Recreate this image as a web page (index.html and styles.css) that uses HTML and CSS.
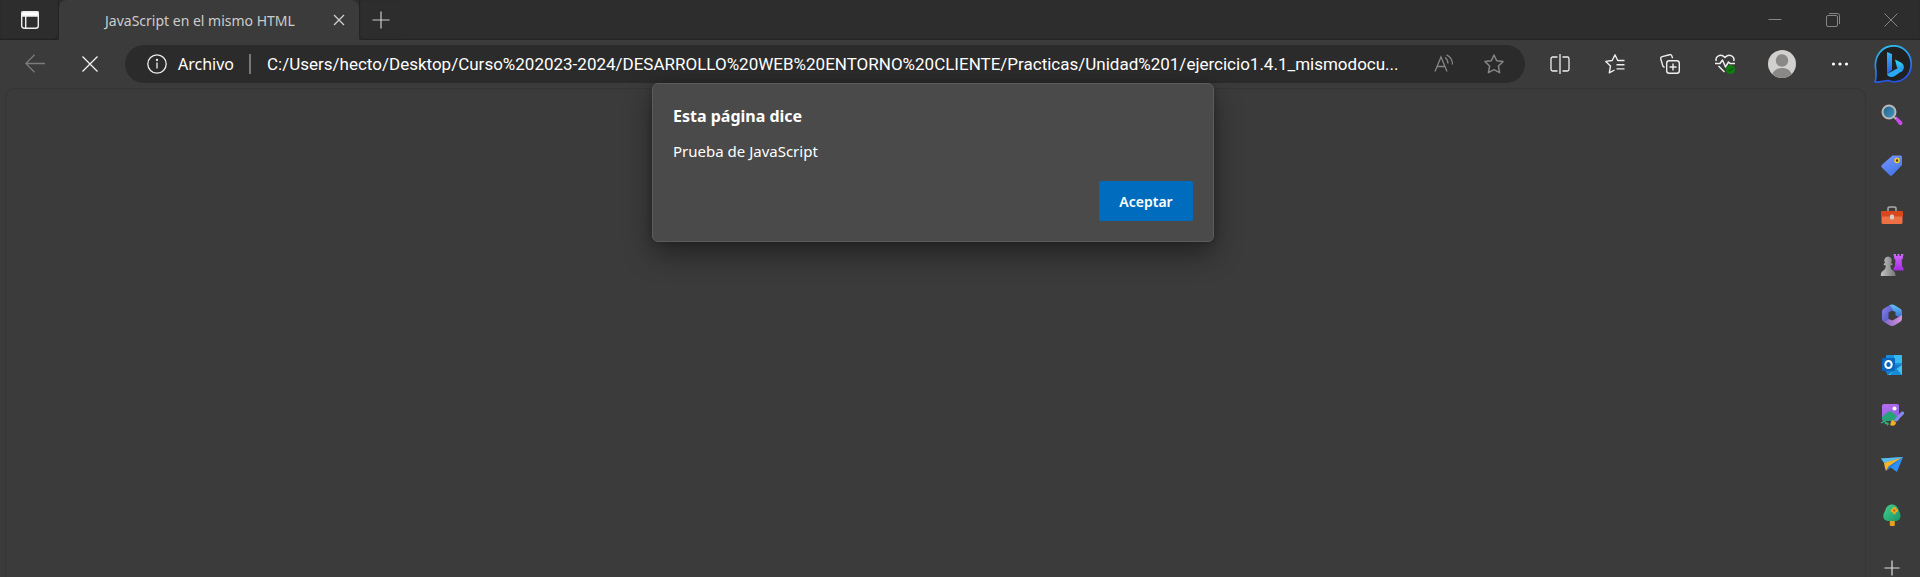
FILE: index.html
```html
<!DOCTYPE html>
<html lang="es">
<head>
<meta charset="utf-8">
<title>JavaScript en el mismo HTML</title>
<link rel="stylesheet" href="styles.css">
</head>
<body>
<header class="tabstrip">
  <button class="tab-actions" aria-label="Acciones de pestaña">
    <svg width="20" height="20" viewBox="0 0 20 20" fill="none" stroke="#eee" stroke-width="1.4"><rect x="1.7" y="1.7" width="16.6" height="16.6" rx="2.5"/><path d="M2 2h16v4H2z" fill="#fff"/><path d="M5.7 6v12"/></svg>
  </button>
  <div class="tab">
    <span class="tab-title">JavaScript en el mismo HTML</span>
    <button class="tab-close" aria-label="Cerrar pestaña">
      <svg width="12" height="12" viewBox="0 0 12 12" stroke="#d0d0d0" stroke-width="1.3"><path d="M1 1l10 10M11 1L1 11"/></svg>
    </button>
  </div>
  <button class="new-tab" aria-label="Nueva pestaña">
    <svg width="18" height="18" viewBox="0 0 18 18" stroke="#ccc" stroke-width="1.2"><path d="M9 .5v17M.5 9h17"/></svg>
  </button>
  <div class="window-controls">
    <button aria-label="Minimizar"><svg width="14" height="14" viewBox="0 0 14 14" stroke="#858585"><path d="M.5 6.5h13"/></svg></button>
    <button aria-label="Restaurar"><svg width="14" height="14" viewBox="0 0 14 14" fill="none" stroke="#858585"><rect x=".5" y="2.5" width="11" height="11" rx="1.5"/><path d="M3 .5h8.500a2 2 0 0 1 2 2V11"/></svg></button>
    <button aria-label="Cerrar"><svg width="14" height="14" viewBox="0 0 14 14" stroke="#858585"><path d="M.5.5l13 13M13.500.5l-13 13"/></svg></button>
  </div>
</header>

<nav class="toolbar" aria-label="Navegación">
  <div class="nav-buttons">
    <button aria-label="Atrás"><svg width="20" height="20" viewBox="0 0 20 20" fill="none" stroke="#7b7b7b" stroke-width="1.3"><path d="M20 9.500H.8M9.500.8L.8 9.500l8.700 8.700"/></svg></button>
    <button aria-label="Detener"><svg width="16" height="16" viewBox="0 0 16 16" stroke="#f2f2f2" stroke-width="1.3"><path d="M.5.5l15 15M15.500.5l-15 15"/></svg></button>
  </div>
  <div class="address">
    <button class="site-info">
      <svg width="20" height="20" viewBox="0 0 20 20" fill="none" stroke="#eee" stroke-width="1.3"><circle cx="10" cy="10" r="9.200"/><path d="M10 8.500V14.500"/><circle cx="10" cy="6" r=".5" fill="#eee"/></svg>
      <span>Archivo</span>
    </button>
    <span class="divider"></span>
    <input class="url" type="text" aria-label="Dirección" value="C:/Users/hecto/Desktop/Curso%202023-2024/DESARROLLO%20WEB%20ENTORNO%20CLIENTE/Practicas/Unidad%201/ejercicio1.4.1_mismodocu...">
    <button class="address-button" aria-label="Leer en voz alta"><svg width="20" height="20" viewBox="0 0 20 20" fill="none" stroke="#858585" stroke-width="1.3"><path d="M1 17.500L7 3l6 14.500M3.200 12.500h7.600M11 3.500c2 1.300 3 3.300 3 6M12.500.8c3.800 1.700 6 5.200 6 9.700"/></svg></button>
    <button class="address-button" aria-label="Agregar a favoritos"><svg width="20" height="20" viewBox="0 0 20 20" fill="none" stroke="#858585" stroke-width="1.500" stroke-linejoin="round"><path d="M10 1l2.700 5.700 6.300.9-4.600 4.400 1.200 6.700-5.600-3-5.600 3L5.600 12 1 7.600l6.300-.9z"/></svg></button>
  </div>
  <div class="tools">
    <button aria-label="Pantalla dividida"><svg width="20" height="20" viewBox="0 0 20 20" fill="none" stroke="#eee" stroke-width="1.3"><path d="M7.500 3H2.800A1.800 1.800 0 0 0 1 4.800v10.400A1.800 1.800 0 0 0 2.800 17H7.500M12.500 3h4.700A1.800 1.800 0 0 1 19 4.800v10.400a1.800 1.800 0 0 1-1.800 1.800h-4.700M10 0v20"/></svg></button>
    <button aria-label="Favoritos"><svg width="20" height="20" viewBox="0 0 20 20" fill="none" stroke="#eee" stroke-width="1.4" stroke-linejoin="round"><path d="M19.500 6.500h-6.800L10 .8 7.200 6.500l-6.400.9 4.700 4.500-1.200 6.900 5.200-2.800M11.500 10.700h8M11.500 14.900h8"/></svg></button>
    <button aria-label="Colecciones"><svg width="20" height="20" viewBox="0 0 20 20" fill="none" stroke="#eee" stroke-width="1.4"><rect x="6.700" y="6.700" width="12.600" height="12.600" rx="2.500"/><path d="M13 9.500v7M9.500 13h7M4.500 13.500l-1.600-1.400L.8 5a2 2 0 0 1 1.400-2.400L9.500.7a2 2 0 0 1 2.400 1.400l.7 2.100"/></svg></button>
    <button aria-label="Rendimiento"><svg width="20" height="20" viewBox="0 0 20 20" fill="none" stroke="#eee" stroke-width="1.5" stroke-linejoin="round"><path d="M1.300 7C-.2 2.500 5.500-1 10 3.500c4.500-4.500 10.200-1 8.700 3.500M0 9.500h5L7.500 6l3 7 3-5 1.500 1.500h5M3.500 12l6 6"/><circle cx="15.500" cy="15.500" r="4.500" fill="#107c10" stroke="none"/><path d="M13.300 15.700l1.500 1.400 2.700-3" stroke="#064b06" stroke-width="1"/></svg></button>
    <button class="profile" aria-label="Perfil"><svg width="28" height="28" viewBox="0 0 28 28"><circle cx="14" cy="14" r="14" fill="#d2d0ce"/><circle cx="14" cy="10.500" r="6.200" fill="#8a8886"/><path d="M4.300 24C6 19.500 10 18 14 18s8 1.500 9.700 6a14 14 0 0 1-19.400 0z" fill="#8a8886"/></svg></button>
    <button aria-label="Configuración y más"><svg width="20" height="20" viewBox="0 0 20 20" fill="#fff"><circle cx="3.500" cy="10" r="1.600"/><circle cx="10" cy="10" r="1.600"/><circle cx="16.500" cy="10" r="1.600"/></svg></button>
  </div>
  <button class="bing" aria-label="Bing">
    <svg width="38" height="38" viewBox="0 0 38 38"><defs><linearGradient id="ring" x2=".3" y2="1"><stop stop-color="#2fc9ef"/><stop offset="1" stop-color="#2456e6"/></linearGradient><linearGradient id="stem" x2="0" y2="1"><stop stop-color="#35b7f5"/><stop offset="1" stop-color="#2860e6"/></linearGradient><linearGradient id="bowl" x2="0" y2="1"><stop stop-color="#31dcf2"/><stop offset="1" stop-color="#2487f2"/></linearGradient></defs>
    <path d="M1 37c1.500-4 1.200-7 .8-12C-.5 11 8 .8 19.500.8c10 0 17.700 8 17.700 18 0 13-11 21-23 16.700C10 35.500 7 37.500 1 37z" fill="#202020" stroke="url(#ring)" stroke-width="1.700"/><path d="M13 7l5 2v16l-5 4z" fill="url(#stem)"/><path d="M21 14.500l6 3c4 2.500 3.500 7 .5 9.500l-2.500-3.500-2-1z" fill="url(#bowl)"/><path d="M13 29l12-6.500 3 3.500-7.500 5.200c-3 1.500-7 .5-7.500-2.200z" fill="#2aaaf5"/></svg>
  </button>
</nav>

<div class="workspace">
  <main class="page">
    <dialog class="alert" open aria-labelledby="alert-title">
      <h1 id="alert-title">Esta página dice</h1>
      <p>Prueba de JavaScript</p>
      <button class="accept">Aceptar</button>
    </dialog>
  </main>
  <aside class="sidebar" aria-label="Barra lateral">
    <button aria-label="Buscar"><svg width="24" height="24" viewBox="0 0 24 24"><defs><linearGradient id="lens" x2="1" y2="1"><stop stop-color="#275c82"/><stop offset="1" stop-color="#3f9cc7"/></linearGradient></defs><path d="M14.500 15.500l2-2 5.300 5a2 2 0 0 1-2.800 3z" fill="#c94aee"/><path d="M13 13l3 3" stroke="#aaa" stroke-width="2"/><circle cx="9" cy="9" r="6.500" fill="url(#lens)" stroke="#b9b9b9" stroke-width="2"/></svg></button>
    <button aria-label="Compras"><svg width="24" height="24" viewBox="0 0 24 24"><defs><linearGradient id="tag" x2=".5" y2="1"><stop stop-color="#7b97ff"/><stop offset="1" stop-color="#4677e8"/></linearGradient></defs><path d="M12.500 2.500h8a1.500 1.500 0 0 1 1.500 1.500v8L12.500 22a2 2 0 0 1-3 0L2 14.800a2 2 0 0 1 0-3z" fill="url(#tag)"/><circle cx="17" cy="7.500" r="2" fill="#493c20" stroke="#f4cd20" stroke-width="1.500"/></svg></button>
    <button aria-label="Herramientas"><svg width="24" height="24" viewBox="0 0 24 24"><path d="M8 8V5.500C8 4.500 9 4 10 4h4c1 0 2 .5 2 1.500V8" fill="none" stroke="#aaa" stroke-width="1.500"/><path d="M1.500 12h21v7.500a1.500 1.500 0 0 1-1.500 1.500H3a1.500 1.500 0 0 1-1.500-1.500z" fill="#ee7045"/><rect x="1" y="8" width="22" height="5.500" rx="1" fill="#d9481c"/><rect x="10" y="11.500" width="4" height="5" rx="1.500" fill="#cecece"/></svg></button>
    <button aria-label="Juegos"><svg width="24" height="24" viewBox="0 0 24 24"><defs><linearGradient id="pawn"><stop stop-color="#c4c4c4"/><stop offset="1" stop-color="#777"/></linearGradient><linearGradient id="rook" x2="0" y2="1"><stop stop-color="#d06aff"/><stop offset="1" stop-color="#a12de0"/></linearGradient></defs><path d="M13.500 1H16v2h1.500V1h2v2H21V1h2.500l-1 5.500h-1l.7 7 1.300 1.500v2.500h-10V15l1.300-1.500.7-7h-1z" fill="url(#rook)"/><path d="M8 3.500a4 4 0 0 1 2.800 6.700h1.700v2h-2c0 3 1 4.300 3 5.800 1.500 1 2 2.500 2 5H.8c0-2.500.5-4 2-5 2-1.500 3-2.800 3-5.800h-2v-2h1.500A4 4 0 0 1 8 3.500z" fill="url(#pawn)"/></svg></button>
    <button aria-label="Microsoft 365"><svg width="24" height="24" viewBox="0 0 24 24"><defs><linearGradient id="m1" y2="1"><stop stop-color="#8f7ff0"/><stop offset="1" stop-color="#3f55b8"/></linearGradient><linearGradient id="m2" x2="0" y2="1"><stop stop-color="#62c4f6"/><stop offset="1" stop-color="#3467d3"/></linearGradient><linearGradient id="m3"><stop stop-color="#8266cb"/><stop offset="1" stop-color="#d793da"/></linearGradient></defs><path d="M9 2.500c2-1.300 4-1.300 6 0l5 3c1.500.9 2 2 2 4v6l-6.500-3V9L9 6z" fill="url(#m2)"/><path d="M10 2L4 5.500c-1.500 1-2 2-2 3.500v6c0 2 .5 3 2 4l4.500-2.500V9.500L13 7z" fill="url(#m1)"/><path d="M4 19l4.500-3 4 1.500L22 12v3c0 2-.5 3-2 4l-5 3c-2 1.200-4 1.200-6 0z" fill="url(#m3)"/></svg></button>
    <button aria-label="Outlook"><svg width="24" height="24" viewBox="0 0 24 24"><rect x="6" y="2" width="16" height="18" rx="1" fill="#168fde"/><path d="M14 2h8v8h-8z" fill="#35b9f1"/><path d="M6 12h16v10H7z" fill="#147bc9"/><path d="M22 12v10H8z" fill="#40c4f4"/><path d="M16 15l6 7H10z" fill="#168bd7"/><rect x="2" y="5" width="13" height="13" rx="1" fill="#0866bc"/><ellipse cx="8.500" cy="11.500" rx="3.200" ry="3.500" fill="none" stroke="#fff" stroke-width="2"/></svg></button>
    <button aria-label="Diseñador"><svg width="24" height="24" viewBox="0 0 24 24"><defs><linearGradient id="photo" x2=".5" y2="1"><stop stop-color="#ba6cf3"/><stop offset="1" stop-color="#8b62db"/></linearGradient></defs><rect x="2" y="1" width="17" height="17" rx="2" fill="url(#photo)"/><path d="M2 14l6-5c1.500-1 3-1 4 0l6.500 6v1.500L17 18H4l-2-2z" fill="#25a475"/><circle cx="14.500" cy="5.500" r="2" fill="#fff"/><path d="M1 20c3-2 6-2 4 1 3-2 4 0 2 1" fill="none" stroke="#28b57d" stroke-width="1.500"/><path d="M14 17l7-8c2-1 4 0 3 2l-8 8z" fill="#8588f0"/><path d="M10 22c1-1 0-4 3-5l3 2.500c0 3-3 4-6 2.500z" fill="#f2ae20"/></svg></button>
    <button aria-label="Enviar"><svg width="24" height="24" viewBox="0 0 24 24"><path d="M1 5.500L23 4l-6 15-5-3.500z" fill="#3090f2"/><path d="M1 5.500L23 4 4 10z" fill="#59bce9"/><path d="M4 10l18-5.500L9.500 13 6 18l-1-3z" fill="#f6b529"/><path d="M22 4.500L8.500 13.500 6 18l5-3.500z" fill="#247fdd"/></svg></button>
    <button aria-label="Árbol"><svg width="24" height="24" viewBox="0 0 24 24"><defs><linearGradient id="tree" x2="1" y2="1"><stop stop-color="#47d18a"/><stop offset="1" stop-color="#169369"/></linearGradient></defs><rect x="9.800" y="17" width="5" height="6" rx="1" fill="#e7a01c"/><path d="M12 1.500c4 0 6 3 7 6.500 3 5 1.500 10-3 10H8c-5 0-6-5-3-10 1-3.500 3-6.500 7-6.500z" fill="url(#tree)"/><g fill="#f8a51b"><circle cx="14.300" cy="5.500" r="1.700"/><circle cx="12.300" cy="7.500" r="1.700"/><circle cx="16.300" cy="7.500" r="1.700"/><circle cx="14.300" cy="9.500" r="1.700"/></g><circle cx="14.300" cy="7.500" r="1" fill="#9b5f17"/></svg></button>
    <button class="customize" aria-label="Personalizar"><svg width="24" height="24" viewBox="0 0 24 24" stroke="#ddd" stroke-width="1.200"><path d="M12 4.500v15M4.500 12h15"/></svg></button>
  </aside>
</div>
</body>
</html>
```
FILE: styles.css
```css
* { box-sizing: border-box; }

body {
  margin: 0;
  height: 100vh;
  overflow: hidden;
  display: flex;
  flex-direction: column;
  background: #3b3b3b;
  color: #fff;
  font-family: "Noto Sans", "Open Sans", sans-serif;
  font-size: 16px;
}

button {
  display: flex;
  align-items: center;
  justify-content: center;
  padding: 0;
  border: 0;
  background: none;
  color: inherit;
  font: inherit;
}

svg { display: block; flex: none; }

.tabstrip {
  display: flex;
  flex: none;
  height: 40px;
  background: #2d2d2d;
  box-shadow: inset 0 -1px 1px #242424;
}

.tab-actions { width: 59px; border-radius: 0 0 6px 0; box-shadow: inset -1px -1px 1px #242424; }

.tab {
  display: flex;
  align-items: center;
  justify-content: space-between;
  width: 300px;
  padding: 0 13px 0 46px;
  border-radius: 8px 8px 0 0;
  background: #3b3b3b;
}

.tab-title { color: #ccc; font-size: 14px; white-space: nowrap; }
.tab-close { width: 14px; height: 20px; }
.new-tab { width: 44px; border-radius: 0 0 0 6px; box-shadow: inset 1px 0 1px #242424; }

.window-controls { display: flex; margin-left: auto; }
.window-controls button { width: 58px; }

.toolbar {
  display: flex;
  flex: none;
  align-items: center;
  height: 48px;
  padding-right: 8px;
}

.nav-buttons { display: flex; padding: 0 8px 0 7px; }
.nav-buttons button { width: 55px; height: 38px; }

.address {
  display: flex;
  flex: 1;
  align-items: center;
  height: 38px;
  padding: 0 6px 0 22px;
  border-radius: 19px;
  background: #2b2b2b;
}

.site-info { gap: 11px; font-size: 16px; }
.divider { width: 2px; height: 20px; margin: 0 16px 0 15px; background: #777; }

.url {
  flex: 1;
  min-width: 0;
  padding: 0;
  border: 0;
  outline: 0;
  background: none;
  color: #fff;
  font-family: Roboto, "Open Sans", sans-serif;
  font-size: 17px;
  text-overflow: ellipsis;
}

.address-button { width: 50px; height: 38px; }

.tools { display: flex; padding-left: 7px; }
.tools button { width: 55px; height: 38px; }
.tools .profile { width: 60px; }

.bing { width: 38px; height: 38px; margin-left: 7px; }

.workspace { display: flex; flex: 1; min-height: 0; padding-left: 5px; }

.page {
  position: relative;
  flex: 1;
  border: 1px solid #353535;
  border-bottom: 0;
  border-radius: 10px 10px 0 0;
}

.alert {
  position: absolute;
  top: -6px;
  right: 5px;
  left: 0;
  width: 562px;
  margin: 0 auto;
  padding: 20px;
  border: 1px solid #5c5c5c;
  border-radius: 6px;
  background: #4a4a4a;
  color: #fff;
  box-shadow: 0 12px 28px rgba(0, 0, 0, .42), 0 0 6px rgba(0, 0, 0, .2);
}

.alert h1 { margin: 0 0 11px; font-size: 16px; line-height: 24px; }
.alert p { margin: 0 0 18px; font-size: 15px; line-height: 24px; }

.accept {
  width: 94px;
  height: 40px;
  margin-left: auto;
  border-radius: 2px;
  background: #006cbe;
  font-size: 14px;
  font-weight: 600;
}

.sidebar { display: flex; flex: none; flex-direction: column; width: 54px; padding: 2px 2px 0 0; }
.sidebar button { flex: none; height: 50px; }
.sidebar .customize { height: 56px; }
```
